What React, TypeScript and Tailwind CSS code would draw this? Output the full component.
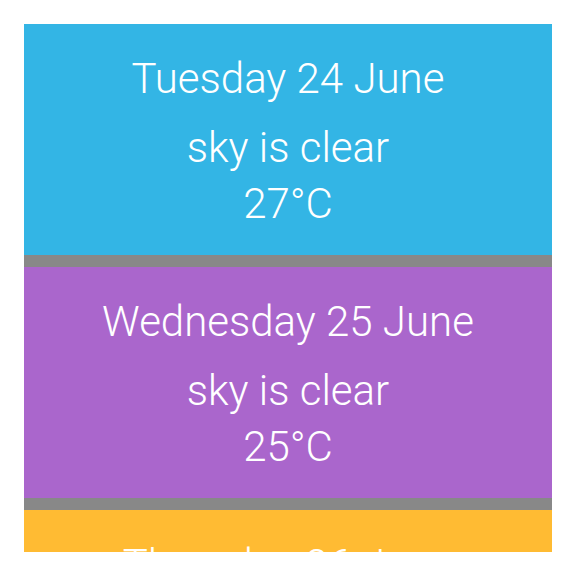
const days = [
  { date: "Tuesday 24 June", desc: "sky is clear", temp: "27°C", color: "bg-[#33b5e5]" },
  { date: "Wednesday 25 June", desc: "sky is clear", temp: "25°C", color: "bg-[#aa66cc]" },
  { date: "Thursday 26 June", desc: "sky is clear", temp: "26°C", color: "bg-[#ffbb33]" },
];

function DayCard({ date, desc, temp, color }: (typeof days)[number]) {
  return (
    <div className={`${color} h-[231px] shrink-0 pt-[27px] text-center text-white`}>
      <h2 className="text-[42px] font-light leading-[56px]">{date}</h2>
      <p className="mt-[13px] text-[42px] font-light leading-[56px]">{desc}</p>
      <p className="text-[42px] font-light leading-[56px]">{temp}</p>
    </div>
  );
}

export default function App() {
  return (
    <div className="h-[576px] w-[576px] bg-white p-6 font-['Roboto',sans-serif]">
      <div className="flex h-full flex-col gap-3 overflow-hidden bg-[#888888]">
        {days.map((d) => (
          <DayCard key={d.date} {...d} />
        ))}
      </div>
    </div>
  );
}
